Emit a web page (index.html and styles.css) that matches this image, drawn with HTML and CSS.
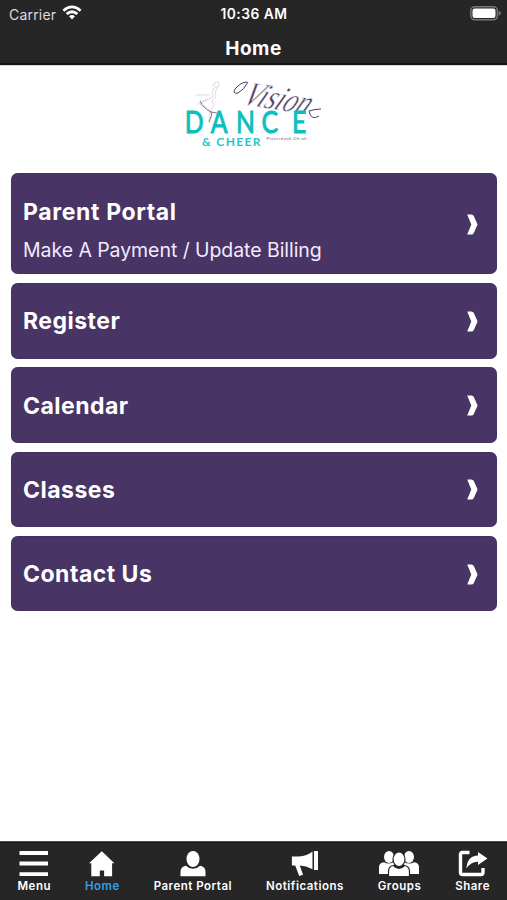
FILE: index.html
```html
<!DOCTYPE html>
<html lang="en">
<head>
<meta charset="utf-8">
<meta name="viewport" content="width=device-width, initial-scale=1">
<title>Home</title>
<link rel="stylesheet" href="styles.css">
</head>
<body>
<header class="top">
  <div class="status">
    <div class="carrier"><span>Carrier</span>
      <svg width="20" height="15" viewBox="0 0 20 15"><g fill="none" stroke="#fff" stroke-width="2.7"><path d="M1.4 5.7Q10-1.9 18.6 5.7"/><path d="M4.6 9.1Q10 4.4 15.4 9.1"/></g><path d="M7 11.3Q10 8.8 13 11.3L10 14.5Z" fill="#fff"/></svg>
    </div>
    <time class="clock">10:36 AM</time>
    <svg class="battery" width="32" height="15" viewBox="0 0 32 15"><rect x=".8" y=".8" width="26.6" height="13" rx="4" fill="#262626" stroke="#777" stroke-width="1.5"/><rect x="2.5" y="2.6" width="23" height="9.4" rx="2.2" fill="#fff"/><path d="M28.7 5Q31 6 31 7.3T28.7 9.8Z" fill="#777"/></svg>
  </div>
  <h1 class="title">Home</h1>
</header>
<main class="page">
  <svg class="logo" width="150" height="85" viewBox="0 0 150 85">
    <g fill="none" stroke="#d2c6d6" stroke-width=".7" stroke-linecap="round"><path d="M35 13q4-3 4 1t-4 3q-4-2 0-4"/><path d="M34 18q-3 4-1 9l-6 3-9 4M38 17q-4 5-2 10l-4 4 2 4-4 7-1 10M27 29q-6 2-7 6 6 2 12 7M16 25h14"/></g>
    <path d="M20 31Q24 39 31 42L37 43M31 42Q33 43 29 52" fill="none" stroke="#75657f" stroke-width=".9"/>
    <text class="logo-script" transform="translate(61 34) rotate(9) skewX(-20)" textLength="66" lengthAdjust="spacingAndGlyphs">Vision</text>
    <path d="M67 12Q61 12 55 19Q52 24 58 23Q64 20 68 12M129 41q2 10 10 5M129 41q6-2 12-2" fill="none" stroke="#4c3b62" stroke-width="1"/>
    <text class="logo-dance" transform="scale(.8 1)" x="6 38.5 70 102 140" y="63.5">DANCE</text>
    <text class="logo-cheer" x="22" y="76.3" textLength="58.5">&amp; CHEER</text>
    <text class="logo-small" x="86.5" y="70.3" textLength="40">Placerdank.Oh.oh</text>
  </svg>
  <nav class="cards">
    <a class="card card-tall"><span class="card-text"><strong>Parent Portal</strong><small>Make A Payment / Update Billing</small></span><svg class="chev" width="11" height="21" viewBox="0 0 11 21"><path d="M.2.5H4.5Q6 .5 6.8 2L10.6 10.5 6.8 19Q6 20.5 4.5 20.5H.2L4.3 10.5Z"/></svg></a>
    <a class="card"><strong>Register</strong><svg class="chev" width="11" height="21" viewBox="0 0 11 21"><path d="M.2.5H4.5Q6 .5 6.8 2L10.6 10.5 6.8 19Q6 20.5 4.5 20.5H.2L4.3 10.5Z"/></svg></a>
    <a class="card"><strong>Calendar</strong><svg class="chev" width="11" height="21" viewBox="0 0 11 21"><path d="M.2.5H4.5Q6 .5 6.8 2L10.6 10.5 6.8 19Q6 20.5 4.5 20.5H.2L4.3 10.5Z"/></svg></a>
    <a class="card"><strong>Classes</strong><svg class="chev" width="11" height="21" viewBox="0 0 11 21"><path d="M.2.5H4.5Q6 .5 6.8 2L10.6 10.5 6.8 19Q6 20.5 4.5 20.5H.2L4.3 10.5Z"/></svg></a>
    <a class="card"><strong>Contact Us</strong><svg class="chev" width="11" height="21" viewBox="0 0 11 21"><path d="M.2.5H4.5Q6 .5 6.8 2L10.6 10.5 6.8 19Q6 20.5 4.5 20.5H.2L4.3 10.5Z"/></svg></a>
  </nav>
</main>
<footer class="tabs">
  <a class="tab"><svg width="30" height="28" viewBox="0 0 30 28"><path d="M.5 2.1h28.5v3.8H.5zM.5 12.6h28.5v3.8H.5zM.5 23.2h28.5v3.8H.5z"/></svg><span>Menu</span></a>
  <a class="tab active"><svg width="26" height="28" viewBox="0 0 26 28"><path d="M12.8 2.2 25.4 14.2H23.1V27.2H15.1V21.5H10.8V27.2H2.3V14.2H0Z"/></svg><span>Home</span></a>
  <a class="tab"><svg width="26" height="28" viewBox="0 0 26 28"><ellipse cx="13" cy="10" rx="6.5" ry="8"/><path d="M.5 27.2V23Q.5 17.5 6 16.7 9 19.8 13 19.8T20 16.7Q25.5 17.5 25.5 23V27.2Z"/></svg><span>Parent Portal</span></a>
  <a class="tab"><svg width="28" height="28" viewBox="0 0 28 28"><path d="M.9 7.5H8Q16 6.8 21.5 2.5V20.2Q15 16.7 8.8 16.5L12 25.7 8.2 27 4.2 16.5H.9ZM23 2h4v19h-4z"/></svg><span>Notifications</span></a>
  <a class="tab"><svg width="42" height="28" viewBox="0 0 42 28"><ellipse cx="11" cy="8" rx="5" ry="6"/><ellipse cx="31" cy="8" rx="5" ry="6"/><path d="M1 25V18Q1 14 6 13.2 10 16 16 13V25ZM26 25V13Q32 16 36 13.2 41 14 41 18V25Z"/><g stroke="#262626" stroke-width="1.2"><ellipse cx="21" cy="10.3" rx="6" ry="7.3"/><path d="M10.5 27.7V22.5Q10.5 17.2 15.5 16.5 18 19.3 21 19.3T26.5 16.5Q31.5 17.2 31.5 22.5V27.7Z"/></g></svg><span>Groups</span></a>
  <a class="tab"><svg width="30" height="28" viewBox="0 0 30 28"><path d="M11.5 3.5H4.5Q2.5 3.5 2.5 5.5V23.5Q2.5 25.5 4.5 25.5H23Q25 25.5 25 23.5V19" fill="none" stroke="#fff" stroke-width="3.4"/><path d="M20 3 29.5 9.4 20 16V12.8Q13 12.5 8.5 19.5 9 6.7 20 6.4Z"/></svg><span>Share</span></a>
</footer>
</body>
</html>
```
FILE: styles.css
```css
* { box-sizing: border-box; }
body { margin: 0; height: 900px; display: flex; flex-direction: column; background: #fff; font-family: Inter, "Liberation Sans", sans-serif; overflow: hidden; }
.top { height: 65px; flex: none; background: #262626; color: #fff; border-bottom: 2px solid #161616; box-shadow: 0 1px 0 #d5d5d5; }
.status { display: grid; grid-template-columns: 1fr auto 1fr; align-items: center; height: 28px; padding: 0 5px 0 9px; }
.carrier { display: flex; align-items: center; gap: 6px; font-size: 14px; letter-spacing: .2px; color: #ddd; height: 28px; align-self: start; }
.carrier svg { margin-top: -3px; }
.clock { font-size: 13.8px; font-weight: 600; letter-spacing: .5px; margin-left: -3px; }
.battery { justify-self: end; margin-top: -1px; }
.title { margin: 9px 0 0; text-align: center; font-size: 19px; line-height: 24px; font-weight: 650; letter-spacing: .5px; }
.page { flex: 1; display: flex; flex-direction: column; }
.logo { margin: 5px 0 0 180px; flex: none; }
.logo-script { font: italic 35px/1 "Liberation Serif", serif; fill: #4c3b62; stroke: #fff; stroke-width: .5px; }
.logo-dance { font: 400 31px/1 Lato, sans-serif; fill: #0bbfc0; stroke: #0bbfc0; stroke-width: 1px; }
.logo-cheer { font: 700 12px/1 Lato, sans-serif; fill: #28c5c7; }
.logo-small { font: 4px/1 Lato, sans-serif; fill: #665e70; }
.cards { display: flex; flex-direction: column; gap: 8.7px; padding: 18.3px 10px 0 11px; }
.card { height: 75.6px; display: flex; align-items: center; justify-content: space-between; padding: 1px 19px 0 12px; border-radius: 7px; background: #483465; color: #fff; box-shadow: inset 0 0 1px #24134a; }
.card-tall { height: 101px; }
.card strong { font-size: 23px; line-height: 28px; font-weight: 650; letter-spacing: .48px; }
.card-tall strong { letter-spacing: .64px; }
.card-text { display: flex; flex-direction: column; gap: 12px; padding-top: 13px; }
.card small { font-size: 19.5px; line-height: 25px; letter-spacing: -.06px; color: #f2eaff; }
.chev { fill: #fff; }
.tabs { height: 59px; flex: none; display: flex; justify-content: space-between; padding: 8px 17px 0 17.5px; background: #262626; box-shadow: inset 0 1px 0 #555, inset 0 2px 0 #181818; }
.tab { display: flex; flex-direction: column; align-items: center; color: #fff; font-size: 11.5px; line-height: 14px; font-weight: 600; letter-spacing: .5px; }
.tab svg { fill: #fff; margin: 0 -6px 2px; }
.active { color: #36a0e6; }
```
